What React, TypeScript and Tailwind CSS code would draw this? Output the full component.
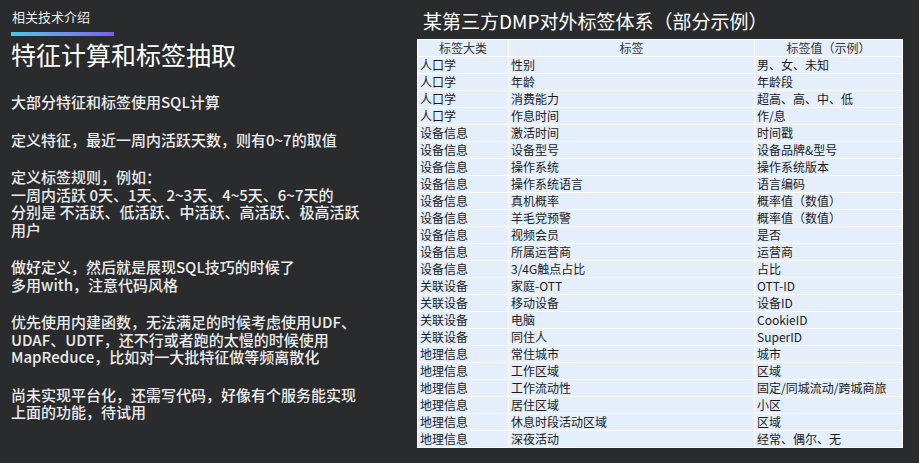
const rows: [string, string, string][] = [
  ["人口学", "性别", "男、女、未知"],
  ["人口学", "年龄", "年龄段"],
  ["人口学", "消费能力", "超高、高、中、低"],
  ["人口学", "作息时间", "作/息"],
  ["设备信息", "激活时间", "时间戳"],
  ["设备信息", "设备型号", "设备品牌&型号"],
  ["设备信息", "操作系统", "操作系统版本"],
  ["设备信息", "操作系统语言", "语言编码"],
  ["设备信息", "真机概率", "概率值（数值）"],
  ["设备信息", "羊毛党预警", "概率值（数值）"],
  ["设备信息", "视频会员", "是否"],
  ["设备信息", "所属运营商", "运营商"],
  ["设备信息", "3/4G触点占比", "占比"],
  ["关联设备", "家庭-OTT", "OTT-ID"],
  ["关联设备", "移动设备", "设备ID"],
  ["关联设备", "电脑", "CookieID"],
  ["关联设备", "同住人", "SuperID"],
  ["地理信息", "常住城市", "城市"],
  ["地理信息", "工作区域", "区域"],
  ["地理信息", "工作流动性", "固定/同城流动/跨城商旅"],
  ["地理信息", "居住区域", "小区"],
  ["地理信息", "休息时段活动区域", "区域"],
  ["地理信息", "深夜活动", "经常、偶尔、无"],
];

export default function App() {
  return (
    <div className="w-[919px] h-[463px] bg-[#2a2b2d] flex overflow-hidden" style={{ fontFamily: '"Noto Sans CJK SC", "Liberation Sans", sans-serif' }}>
      <div className="w-[417px] pl-[11px] pt-[6px] text-[#ececec]">
        <div className="text-[13px] leading-[22px] pl-[1px]">相关技术介绍</div>
        <div className="w-[103px] h-[4px] mt-[4px] bg-gradient-to-r from-[#3ec8e6] to-[#7b5cf0]" />
        <div className="text-[25px] leading-[34px] mt-[1px] text-white">特征计算和标签抽取</div>
        <div className="text-[15px] leading-[17.5px] mt-[22px] space-y-[20px] font-medium">
          <p>大部分特征和标签使用SQL计算</p>
          <p>定义特征，最近一周内活跃天数，则有0~7的取值</p>
          <p>定义标签规则，例如：<br />一周内活跃 0天、1天、2~3天、4~5天、6~7天的<br />分别是 不活跃、低活跃、中活跃、高活跃、极高活跃<br />用户</p>
          <p>做好定义，然后就是展现SQL技巧的时候了<br />多用with，注意代码风格</p>
          <p>优先使用内建函数，无法满足的时候考虑使用UDF、<br />UDAF、UDTF，还不行或者跑的太慢的时候使用<br />MapReduce，比如对一大批特征做等频离散化</p>
          <p>尚未实现平台化，还需写代码，好像有个服务能实现<br />上面的功能，待试用</p>
        </div>
      </div>
      <div className="flex-1 pt-[8px]">
        <div className="text-[19px] leading-[26px] text-white pl-[6px]">某第三方DMP对外标签体系（部分示例）</div>
        <table className="mt-[5px] w-[486px] border-collapse text-[12px] text-[#1a1a1a] bg-[#e5effc]">
          <colgroup>
            <col className="w-[91px]" />
            <col className="w-[246px]" />
            <col />
          </colgroup>
          <thead>
            <tr className="h-[17px] text-[#333]">
              <th className="font-normal border border-white leading-[16px] py-0">标签大类</th>
              <th className="font-normal border border-white leading-[16px] py-0">标签</th>
              <th className="font-normal border border-white leading-[16px] py-0">标签值（示例）</th>
            </tr>
          </thead>
          <tbody>
            {rows.map((r, i) => (
              <tr key={i} className="h-[17px]">
                {r.map((c, j) => (
                  <td key={j} className="border border-white px-[2px] leading-[16px] py-0 whitespace-nowrap">{c}</td>
                ))}
              </tr>
            ))}
          </tbody>
        </table>
      </div>
    </div>
  );
}
